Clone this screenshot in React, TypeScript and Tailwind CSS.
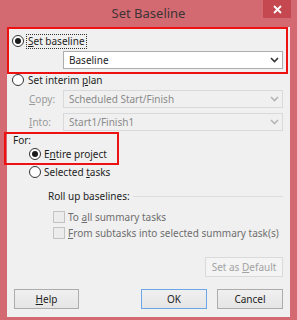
import React from "react";

const Chevron = ({ color }: { color: string }) => (
  <svg width="9" height="6" viewBox="0 0 9 6" className="shrink-0">
    <polyline points="1,1 4.5,4.5 8,1" fill="none" stroke={color} strokeWidth="1.6" />
  </svg>
);

const Radio = ({ checked }: { checked?: boolean }) => (
  <span className="w-[12px] h-[12px] rounded-full border border-[#333333] bg-white flex items-center justify-center shrink-0">
    {checked && <span className="w-[6px] h-[6px] rounded-full bg-[#1a1a1a]" />}
  </span>
);

const Select = ({ text, disabled }: { text: string; disabled?: boolean }) => (
  <div
    className={
      "w-[220px] h-[18px] flex items-center justify-between pl-[5px] pr-[3px] border " +
      (disabled ? "bg-[#f0f0f0] border-[#d9d9d9] text-[#8a8a8a]" : "bg-white border-[#adadad] text-[#1e1e1e]")
    }
  >
    <span>{text}</span>
    <Chevron color={disabled ? "#b5b5b5" : "#333333"} />
  </div>
);

const Check = () => (
  <span className="w-[12px] h-[12px] border border-[#c3c3c3] bg-[#ececec] shrink-0" />
);

const Btn = ({ children, w, ml, def, disabled }: { children: React.ReactNode; w: string; ml: string; def?: boolean; disabled?: boolean }) => (
  <div
    className={
      `${w} ${ml} h-[20px] flex items-center justify-center border ` +
      (disabled
        ? "bg-[#f4f4f4] border-[#dadada] text-[#a2a2a2]"
        : def
        ? "bg-gradient-to-b from-[#f0f0f0] to-[#e5e5e5] border-[#6aa6e8] text-[#1e1e1e]"
        : "bg-gradient-to-b from-[#f0f0f0] to-[#e5e5e5] border-[#acacac] text-[#1e1e1e]")
    }
  >
    {children}
  </div>
);

export default function App() {
  return (
    <div className="w-[297px] h-[320px] bg-[#d36a72] flex flex-col px-[7px] pb-[3px] font-['Noto_Sans',sans-serif] text-[10px] leading-[12px] text-[#1e1e1e] overflow-hidden">
      <div className="relative h-[27px] -mx-[7px] flex items-start justify-center">
        <span className="mt-[5px] text-[13px] leading-[17px] text-[#3d3436]">Set Baseline</span>
        <div className="absolute right-[6px] top-0 w-[28px] h-[18px] bg-[#c5474f] flex items-center justify-center">
          <svg width="9" height="9" viewBox="0 0 9 9">
            <path d="M1 1 L8 8 M8 1 L1 8" stroke="#ffffff" strokeWidth="1.8" />
          </svg>
        </div>
      </div>
      <div className="flex-1 bg-[#f0f0f0] flex flex-col pr-[7px]">
        {/* box 1 */}
        <div className="w-[281px] border-2 border-[#ee1111] flex flex-col pt-[4px] pb-[3px] pl-[3px]">
          <div className="h-[16px] flex items-center gap-[3px]">
            <Radio checked />
            <span className="outline outline-1 outline-dotted outline-[#333] px-[1px] leading-[13px]">
              <u>S</u>et baseline
            </span>
          </div>
          <div className="mt-[2px] ml-[51px]">
            <Select text="Baseline" />
          </div>
        </div>
        <div className="h-[12px] ml-[5px] flex items-center gap-[4px]">
          <Radio />
          <span>Set interim <u>p</u>lan</span>
        </div>
        <div className="mt-[4px] flex items-center">
          <span className="w-[34px] ml-[22px] text-[#9a9a9a]"><u>C</u>opy:</span>
          <Select text="Scheduled Start/Finish" disabled />
        </div>
        <div className="mt-[5px] flex items-center">
          <span className="w-[34px] ml-[22px] text-[#9a9a9a]"><u>I</u>nto:</span>
          <Select text="Start1/Finish1" disabled />
        </div>
        {/* For box */}
        <div className="mt-[1px] -ml-[3px] w-[115px] border-2 border-[#ee1111] flex flex-col pt-0 pb-[3px]">
          <span className="ml-[7px] leading-[12px]">For:</span>
          <div className="mt-[2px] ml-[23px] h-[12px] flex items-center gap-[3px]">
            <Radio checked />
            <span>E<u>n</u>tire project</span>
          </div>
        </div>
        <div className="mt-[1px] ml-[22px] h-[12px] flex items-center gap-[3px]">
          <Radio />
          <span>Selected <u>t</u>asks</span>
        </div>
        <div className="mt-[12px] ml-[41px] h-[12px] flex items-center gap-[3px]">
          <span>Roll up baselines:</span>
          <span className="flex-1 h-px bg-[#dcdcdc]" />
        </div>
        <div className="mt-[9px] ml-[46px] h-[12px] flex items-center gap-[3px] text-[#6e6e6e]">
          <Check />
          <span>To <u>a</u>ll summary tasks</span>
        </div>
        <div className="mt-[4px] ml-[46px] h-[12px] flex items-center gap-[3px] text-[#6e6e6e]">
          <Check />
          <span><u>F</u>rom subtasks into selected summary task(s)</span>
        </div>
        <div className="mt-[18px] flex justify-end">
          <Btn w="w-[78px]" ml="" disabled>
            <span>Set as <u>D</u>efault</span>
          </Btn>
        </div>
        <div className="mt-[12px] flex">
          <Btn w="w-[65px]" ml="ml-[7px]">
            <span><u>H</u>elp</span>
          </Btn>
          <Btn w="w-[66px]" ml="ml-[62px]" def>
            OK
          </Btn>
          <Btn w="w-[66px]" ml="ml-[10px]">
            Cancel
          </Btn>
        </div>
      </div>
    </div>
  );
}
